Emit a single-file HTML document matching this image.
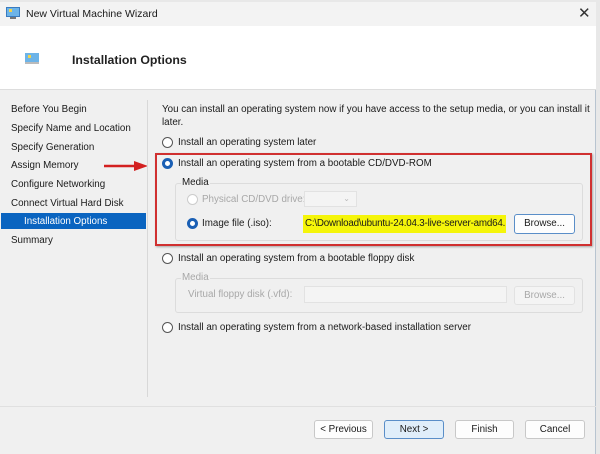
<!DOCTYPE html>
<html><head><style>
*{margin:0;padding:0;box-sizing:border-box}
body{width:600px;height:454px;background:#e8e8e8;font-family:"Liberation Sans",sans-serif;font-size:9.8px;color:#1a1a1a;position:relative;overflow:hidden}
.a{position:absolute;white-space:nowrap}
.win{position:absolute;left:0;top:2px;width:596px;height:452px;background:#f0f0f0;border-right:1px solid #b8c4d0}
.rad{position:absolute;width:11px;height:11px;border:1px solid #555;border-radius:50%;background:#fff}
.rad.on{border:3px solid #1a5fb4;background:#fff}
.rad.dis{border-color:#ccc}
.btn{position:absolute;height:19px;border:1px solid #c8c8c8;background:#fdfdfd;border-radius:3px;text-align:center;line-height:17px}
.grp{position:absolute;border:1px solid #dcdcdc;border-radius:3px}
.dis{color:#a8a8a8}
</style></head><body>
<div class="win">
 <div class="a" style="left:0;top:0;width:596px;height:24px;background:#f3f3f3"></div>
 <svg class="a" style="left:6px;top:5px" width="14" height="12"><rect x="0.5" y="0.5" width="13" height="9" fill="#6db4e8" stroke="#3a7bbf"/><rect x="3" y="2" width="3" height="3" fill="#f2d44c"/><rect x="4" y="10" width="6" height="2" fill="#777"/></svg>
 <div class="a" style="left:26px;top:6px;font-size:10.5px">New Virtual Machine Wizard</div>
 <div class="a" style="left:578px;top:2px;font-size:15px;color:#333">✕</div>
 <div class="a" style="left:0;top:24px;width:596px;height:63px;background:#fff"></div>
 <svg class="a" style="left:25px;top:51px" width="14" height="11"><rect x="0" y="0" width="14" height="9" fill="#6db4e8"/><rect x="3" y="2" width="3" height="3" fill="#f2d44c"/><rect x="0" y="9" width="14" height="2" fill="#bbb"/></svg>
 <div class="a" style="left:72px;top:51px;font-size:12.3px;font-weight:bold;color:#222">Installation Options</div>
 <div class="a" style="left:0;top:87px;width:596px;height:1px;background:#ddd"></div>
 <div class="a" style="left:11px;top:102px">Before You Begin</div>
 <div class="a" style="left:11px;top:121px">Specify Name and Location</div>
 <div class="a" style="left:11px;top:140px">Specify Generation</div>
 <div class="a" style="left:11px;top:158px">Assign Memory</div>
 <div class="a" style="left:11px;top:177px">Configure Networking</div>
 <div class="a" style="left:11px;top:196px">Connect Virtual Hard Disk</div>
 <div class="a" style="left:1px;top:211px;width:145px;height:16px;background:#0a64c0"></div>
 <div class="a" style="left:24px;top:214px;color:#fff">Installation Options</div>
 <div class="a" style="left:11px;top:233px">Summary</div>
 <svg class="a" style="left:104px;top:159px" width="44" height="10"><line x1="0" y1="5" x2="32" y2="5" stroke="#d32020" stroke-width="2.5"/><polygon points="30,0 44,5 30,10" fill="#d32020"/></svg>
 <div class="a" style="left:147px;top:98px;width:1px;height:297px;background:#d8d8d8"></div>
 <div class="a" style="left:162px;top:102px">You can install an operating system now if you have access to the setup media, or you can install it</div>
 <div class="a" style="left:162px;top:115px">later.</div>
 <div class="rad" style="left:162px;top:135px"></div>
 <div class="a" style="left:178px;top:135px">Install an operating system later</div>
 <div class="a" style="left:155px;top:151px;width:437px;height:93px;border:2px solid #d03030;box-shadow:1px 1px 2px rgba(0,0,0,.3)"></div>
 <div class="rad on" style="left:162px;top:156px"></div>
 <div class="a" style="left:178px;top:156px">Install an operating system from a bootable CD/DVD-ROM</div>
 <div class="grp" style="left:175px;top:181px;width:408px;height:58px"></div>
 <div class="a" style="left:181px;top:175px;background:#f0f0f0;padding:0 1px">Media</div>
 <div class="rad dis" style="left:187px;top:192px"></div>
 <div class="a dis" style="left:202px;top:192px">Physical CD/DVD drive:</div>
 <div class="a" style="left:304px;top:189px;width:53px;height:16px;border:1px solid #e2e2e2;background:#f4f4f4;color:#bbb;font-size:8px;text-align:right;padding-right:6px;line-height:14px">⌄</div>
 <div class="rad on" style="left:187px;top:216px"></div>
 <div class="a" style="left:202px;top:216px">Image file (.iso):</div>
 <div class="a" style="left:303px;top:213px;width:203px;height:18px;background:#f5f50a;line-height:18px;padding-left:2px;overflow:hidden;letter-spacing:-0.2px">C:\Download\ubuntu-24.04.3-live-server-amd64.</div>
 <div class="btn" style="left:514px;top:212px;width:61px;border-color:#5a8ec8;height:20px;line-height:18px">Browse...</div>
 <div class="rad" style="left:162px;top:251px"></div>
 <div class="a" style="left:178px;top:251px">Install an operating system from a bootable floppy disk</div>
 <div class="grp" style="left:175px;top:276px;width:408px;height:35px"></div>
 <div class="a dis" style="left:181px;top:270px;background:#f0f0f0;padding:0 1px">Media</div>
 <div class="a dis" style="left:188px;top:287px">Virtual floppy disk (.vfd):</div>
 <div class="a" style="left:304px;top:284px;width:203px;height:17px;border:1px solid #e2e2e2;background:#f4f4f4"></div>
 <div class="btn dis" style="left:514px;top:284px;width:61px;background:#f4f4f4;border-color:#e2e2e2">Browse...</div>
 <div class="rad" style="left:162px;top:320px"></div>
 <div class="a" style="left:178px;top:320px">Install an operating system from a network-based installation server</div>
 <div class="a" style="left:0;top:404px;width:596px;height:1px;background:#e0e0e0"></div>
 <div class="btn" style="left:314px;top:418px;width:59px">&lt; Previous</div>
 <div class="btn" style="left:384px;top:418px;width:60px;background:#e0eefa;border-color:#5a8ec8">Next &gt;</div>
 <div class="btn" style="left:455px;top:418px;width:59px">Finish</div>
 <div class="btn" style="left:525px;top:418px;width:60px">Cancel</div>
</div>
</body></html>
